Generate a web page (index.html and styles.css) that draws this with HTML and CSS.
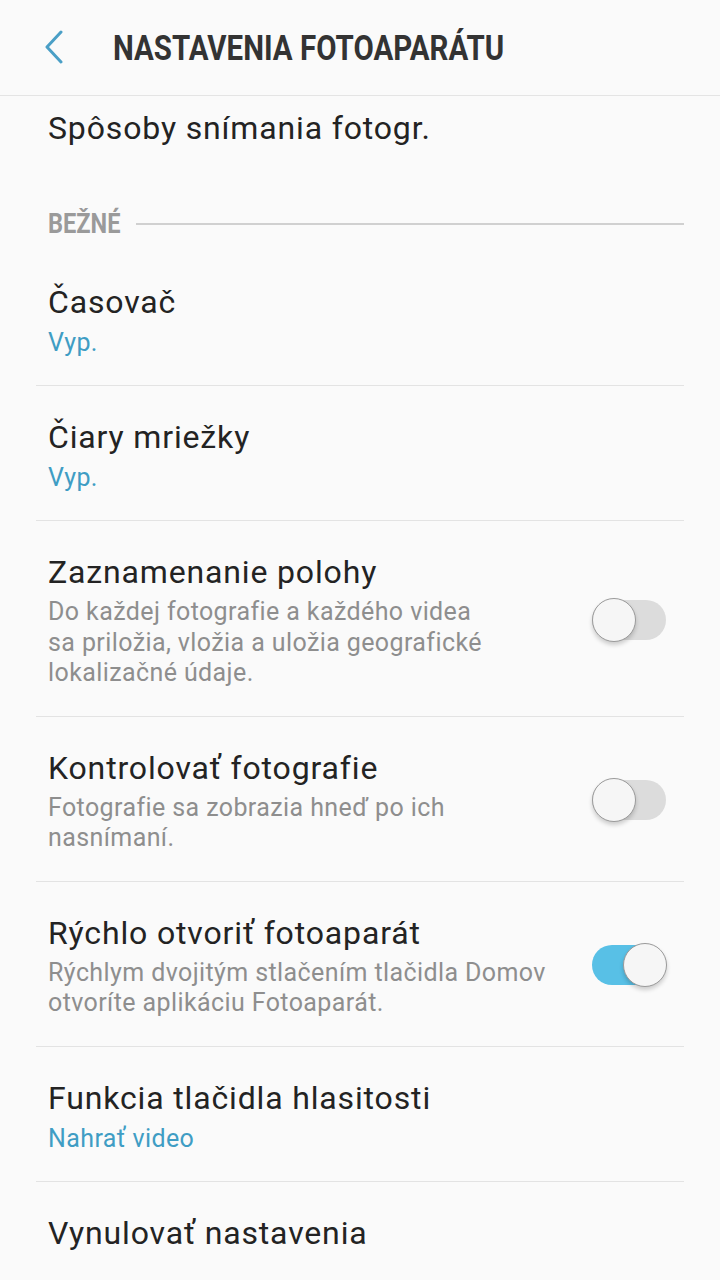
FILE: index.html
```html
<!DOCTYPE html>
<html lang="sk">
<head>
<meta charset="utf-8">
<title>Nastavenia fotoaparátu</title>
<link rel="stylesheet" href="styles.css">
</head>
<body>
<div class="screen">
  <header class="appbar">
    <button class="back" aria-label="Späť">
      <svg width="24" height="34" viewBox="0 0 24 34"><path d="M19 2 L5 17 L19 32" fill="none" stroke="#4a9fc6" stroke-width="3" stroke-linecap="round" stroke-linejoin="round"/></svg>
    </button>
    <h1 class="title"><span class="cond">NASTAVENIA FOTOAPARÁTU</span></h1>
  </header>

  <div class="list">
    <div class="item first">
      <div class="text"><div class="primary">Spôsoby snímania fotogr.</div></div>
    </div>

    <div class="section">
      <span class="cond section-label">BEŽNÉ</span>
      <span class="section-line"></span>
    </div>

    <div class="item bordered">
      <div class="text">
        <div class="primary">Časovač</div>
        <div class="value">Vyp.</div>
      </div>
    </div>

    <div class="item bordered">
      <div class="text">
        <div class="primary">Čiary mriežky</div>
        <div class="value">Vyp.</div>
      </div>
    </div>

    <div class="item bordered">
      <div class="text">
        <div class="primary">Zaznamenanie polohy</div>
        <div class="secondary">Do každej fotografie a každého videa<br>sa priložia, vložia a uložia geografické<br>lokalizačné údaje.</div>
      </div>
      <div class="switch"><span class="knob"></span></div>
    </div>

    <div class="item bordered">
      <div class="text">
        <div class="primary">Kontrolovať fotografie</div>
        <div class="secondary">Fotografie sa zobrazia hneď po ich<br>nasnímaní.</div>
      </div>
      <div class="switch"><span class="knob"></span></div>
    </div>

    <div class="item bordered">
      <div class="text">
        <div class="primary">Rýchlo otvoriť fotoaparát</div>
        <div class="secondary">Rýchlym dvojitým stlačením tlačidla Domov<br>otvoríte aplikáciu Fotoaparát.</div>
      </div>
      <div class="switch on"><span class="knob"></span></div>
    </div>

    <div class="item bordered">
      <div class="text">
        <div class="primary">Funkcia tlačidla hlasitosti</div>
        <div class="value">Nahrať video</div>
      </div>
    </div>

    <div class="item">
      <div class="text"><div class="primary">Vynulovať nastavenia</div></div>
    </div>
  </div>
</div>
</body>
</html>
```

FILE: styles.css
```css
* { box-sizing: border-box; }
html, body {
  margin: 0;
  padding: 0;
  background: #fafafa;
}
body {
  font-family: Roboto, "Noto Sans", "Liberation Sans", sans-serif;
  color: #232323;
  width: 720px;
  height: 1280px;
  overflow: hidden;
}
.screen {
  width: 720px;
  height: 1280px;
  display: flex;
  flex-direction: column;
}
.appbar {
  height: 96px;
  flex: none;
  display: flex;
  align-items: center;
  border-bottom: 1px solid #e4e4e4;
  padding-left: 42px;
}
.back {
  border: 0;
  background: none;
  padding: 0;
  margin: 0;
  width: 24px;
  height: 34px;
  display: flex;
  margin-top: -2px;
}
.title {
  margin: 0 0 0 47px;
  font-size: 35px;
  font-weight: 700;
  color: #333333;
  line-height: 40px;
  margin-top: 2px;
}
.cond {
  display: inline-block;
  transform: scaleX(0.842);
  transform-origin: left center;
  white-space: nowrap;
}
.list {
  display: flex;
  flex-direction: column;
  padding: 0 36px;
}
.item {
  display: flex;
  align-items: center;
  padding: 30px 18px 27px 12px;
}
.item.first {
  padding-top: 11px;
  padding-bottom: 21px;
}
.item.bordered {
  border-bottom: 1px solid #e3e3e3;
}
.text {
  flex: 1;
  min-width: 0;
}
.primary {
  font-size: 32px;
  line-height: 42px;
  letter-spacing: 0.85px;
  color: #232323;
  white-space: nowrap;
}
.value {
  margin-top: 4px;
  font-size: 25px;
  line-height: 31px;
  letter-spacing: 0.4px;
  color: #3f9dc4;
}
.secondary {
  margin-top: 4px;
  font-size: 25px;
  line-height: 30.5px;
  letter-spacing: 0.4px;
  color: #8e8e8e;
  white-space: nowrap;
}
.section {
  display: flex;
  align-items: center;
  padding: 39px 0 12px 12px;
  height: 81px;
}
.section-label {
  font-size: 28px;
  font-weight: 700;
  line-height: 30px;
  color: #9a9a9a;
  width: 78px;
}
.section-line {
  flex: 1;
  height: 2px;
  background: #d0d0d0;
  margin-left: 10px;
  margin-top: -1px;
}
.switch {
  flex: none;
  position: relative;
  width: 74px;
  height: 40px;
  border-radius: 20px;
  background: #dcdcdc;
}
.switch.on {
  background: #58c0e6;
}
.knob {
  position: absolute;
  top: -2px;
  left: 0;
  width: 44px;
  height: 44px;
  border-radius: 50%;
  background: #f6f6f6;
  border: 1.5px solid #9a9a9a;
  box-shadow: 0 3px 4px rgba(0, 0, 0, 0.18);
}
.switch.on .knob {
  left: 31px;
}
```
